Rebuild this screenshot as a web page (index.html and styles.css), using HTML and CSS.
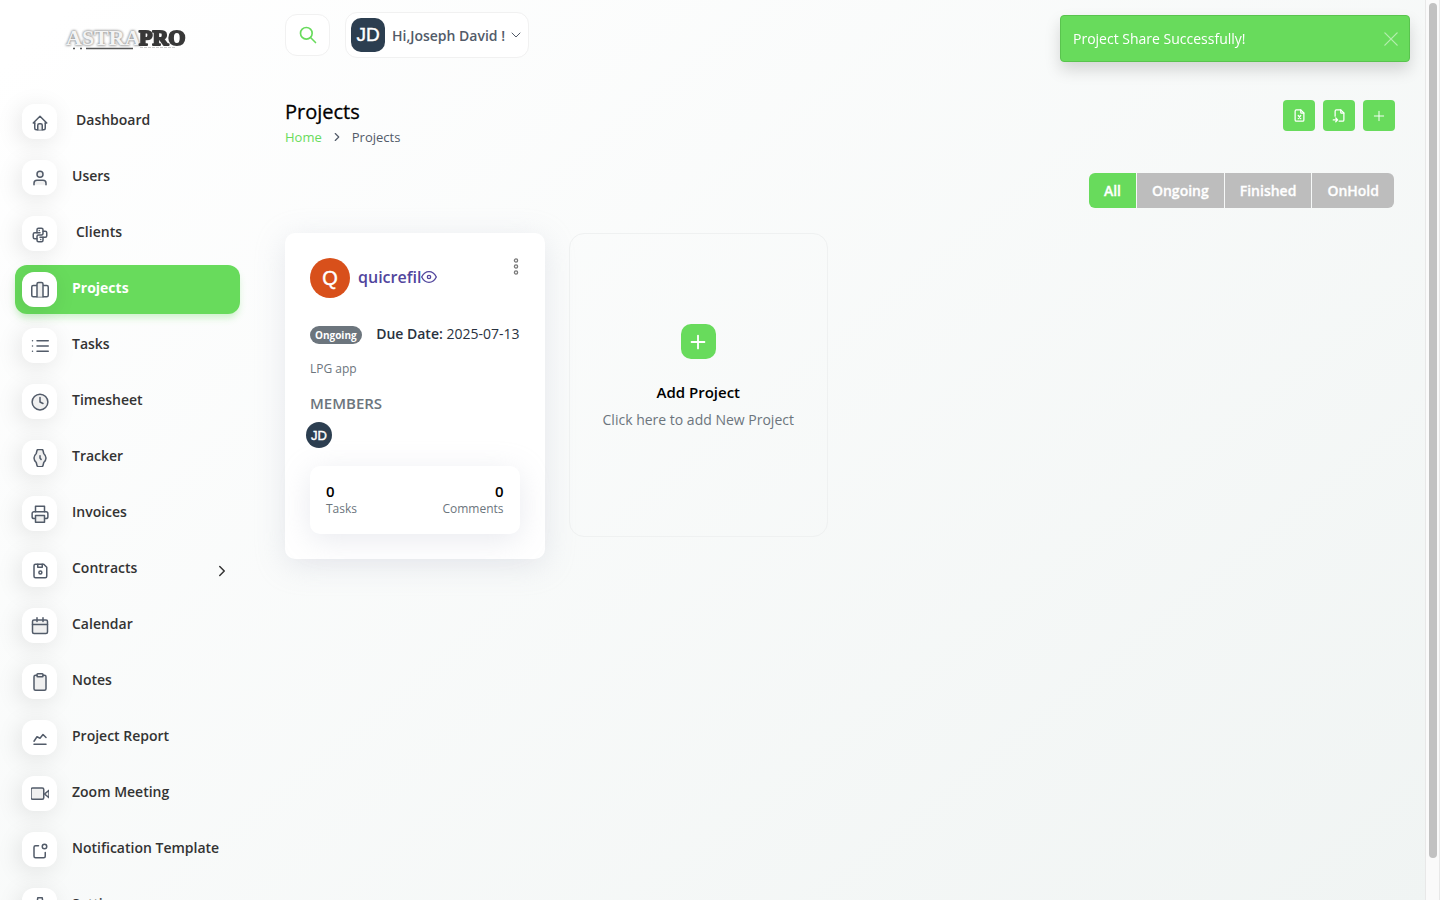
FILE: index.html
```html
<!DOCTYPE html>
<html lang="en">

<head>
    <meta charset="utf-8">
    <meta name="viewport" content="width=device-width, initial-scale=1">
    <title>Projects</title>
    <link rel="stylesheet" href="styles.css">
</head>

<body>
    <nav class="sidebar">
        <a href="#" class="logo" aria-label="AstraPro">
            <svg width="130" height="34" viewBox="0 0 130 34">
                <text x="6" y="22" class="logo-glow">ASTRA</text>
                <text x="6" y="22" class="logo-light">ASTRA</text>
                <text x="79" y="22" class="logo-dark">PRO</text>
                <path d="M13 25.500h2M20 25.500h2M26 25.500h47" stroke="#555" stroke-width="1.4" stroke-linecap="butt"/>
                <path d="M80 24.500h35" stroke="#ccc" stroke-width="1" stroke-linecap="butt" stroke-dasharray="3 1"/>
            </svg>
        </a>
        <ul class="menu">
            <li><a href="#" class="menu-link indent">
                <span class="micon"><svg class="icon low" viewBox="0 0 24 24"><path d="M5 12H3l9-9 9 9h-2"/><path d="M5 12v7a2 2 0 0 0 2 2h10a2 2 0 0 0 2-2v-7"/><path class="tint" d="M9 21v-6a2 2 0 0 1 2-2h2a2 2 0 0 1 2 2v6"/></svg></span>
                <span>Dashboard</span></a></li>
            <li><a href="#" class="menu-link">
                <span class="micon"><svg class="icon" viewBox="0 0 24 24"><path class="tint" d="M20 21v-2a4 4 0 0 0-4-4H8a4 4 0 0 0-4 4v2"/><circle class="tint" cx="12" cy="7" r="4"/></svg></span>
                <span>Users</span></a></li>
            <li><a href="#" class="menu-link indent">
                <span class="micon"><svg class="icon low" viewBox="0 0 24 24"><path d="M12 9H5a2 2 0 0 0-2 2v4a2 2 0 0 0 2 2h3"/><path d="M12 15h7a2 2 0 0 0 2-2V9a2 2 0 0 0-2-2h-3"/><path d="M8 9V5a2 2 0 0 1 2-2h4a2 2 0 0 1 2 2v5a2 2 0 0 1-2 2h-4a2 2 0 0 0-2 2v5a2 2 0 0 0 2 2h4a2 2 0 0 0 2-2v-4"/><path d="M11 6v.01M13 18v.01"/></svg></span>
                <span>Clients</span></a></li>
            <li><a href="#" class="menu-link active">
                <span class="micon"><svg class="icon" viewBox="0 0 24 24"><rect x="1" y="6" width="22" height="15" rx="2"/><path class="tint" d="M16 21V4a2 2 0 0 0-2-2h-4a2 2 0 0 0-2 2v17"/></svg></span>
                <span>Projects</span></a></li>
            <li><a href="#" class="menu-link">
                <span class="micon"><svg class="icon" viewBox="0 0 24 24"><path d="M8 5h15M8 12h15M8 19h15M2 5h.01M2 12h.01M2 19h.01"/></svg></span>
                <span>Tasks</span></a></li>
            <li><a href="#" class="menu-link">
                <span class="micon"><svg class="icon" viewBox="0 0 24 24"><circle class="tint" cx="12" cy="12" r="10.500"/><path d="M12 6v6l4 2"/></svg></span>
                <span>Timesheet</span></a></li>
            <li><a href="#" class="menu-link">
                <span class="micon"><svg class="icon" viewBox="0 0 24 24"><path class="tint" d="M7 6l1-4q.400-1.500 2-1.500h4q1.600 0 2 1.500l1 4q3 3 3 6t-3 6l-1 4q-.400 1.500-2 1.500h-4q-1.600 0-2-1.500l-1-4q-3-3-3-6t3-6z"/><path d="M12 9v3l1.500 2"/></svg></span>
                <span>Tracker</span></a></li>
            <li><a href="#" class="menu-link">
                <span class="micon"><svg class="icon" viewBox="0 0 24 24"><path d="M6 9V1.500h12V9"/><path d="M6 18H4a2.500 2.500 0 0 1-2.500-2.500v-4A2.500 2.500 0 0 1 4 9h16a2.500 2.500 0 0 1 2.500 2.500v4A2.500 2.500 0 0 1 20 18h-2"/><path class="tint" d="M6 14h12v9H6z"/></svg></span>
                <span>Invoices</span></a></li>
            <li><a href="#" class="menu-link">
                <span class="micon"><svg class="icon low" viewBox="0 0 24 24"><path d="M6 3h11l4 4v12a2 2 0 0 1-2 2H6a2 2 0 0 1-2-2V5a2 2 0 0 1 2-2"/><circle cx="12.500" cy="14" r="2"/><path d="M15 3v4H9V3"/></svg></span>
                <span>Contracts</span>
                <svg class="arrow" viewBox="0 0 24 24"><path d="M9 18l6-6-6-6"/></svg></a></li>
            <li><a href="#" class="menu-link">
                <span class="micon"><svg class="icon" viewBox="0 0 24 24"><rect class="tint" x="2" y="4" width="20" height="18" rx="2"/><path d="M16 1v5M8 1v5M2 10h20"/></svg></span>
                <span>Calendar</span></a></li>
            <li><a href="#" class="menu-link">
                <span class="micon"><svg class="icon" viewBox="0 0 24 24"><path class="tint" d="M16 3h2a2 2 0 0 1 2 2v16a2 2 0 0 1-2 2H6a2 2 0 0 1-2-2V5a2 2 0 0 1 2-2h2"/><rect x="8" y="1" width="8" height="4" rx="1"/></svg></span>
                <span>Notes</span></a></li>
            <li><a href="#" class="menu-link">
                <span class="micon"><svg class="icon low" viewBox="0 0 24 24"><path d="M4 19h16M4 15l4-6 4 2 4-5 4 4"/></svg></span>
                <span>Project Report</span></a></li>
            <li><a href="#" class="menu-link">
                <span class="micon"><svg class="icon" viewBox="0 0 24 24"><rect class="tint" x="0" y="4" width="17" height="15" rx="2"/><path class="tint" d="M24 7l-6 5 6 5z"/></svg></span>
                <span>Zoom Meeting</span></a></li>
            <li><a href="#" class="menu-link">
                <span class="micon"><svg class="icon low" viewBox="0 0 24 24"><path d="M10 5H6a2 2 0 0 0-2 2v12a2 2 0 0 0 2 2h11a2 2 0 0 0 2-2v-5"/><circle cx="18" cy="6" r="3"/></svg></span>
                <span>Notification Template</span></a></li>
            <li><a href="#" class="menu-link">
                <span class="micon"><svg class="icon" viewBox="0 0 24 24"><path d="M9 1h6l.500 4 2.500 1.500 3-1 2 3.500-2.500 3 2.500 3-2 3.500-3-1-2.500 1.500-.500 4H9l-.500-4L6 17.500l-3 1L1 15l2.500-3L1 9l2-3.500 3 1L8.500 5z"/><circle cx="12" cy="12" r="3"/></svg></span>
                <span>Settings</span></a></li>
        </ul>
    </nav>

    <main class="content">
        <header class="topbar">
            <button type="button" class="search-btn" aria-label="Search">
                <svg viewBox="0 0 24 24"><circle cx="10" cy="10" r="7"/><path d="M21 21l-6-6"/></svg>
            </button>
            <button type="button" class="user-btn">
                <span class="avatar">JD</span>
                <span>Hi,Joseph David !</span>
                <svg viewBox="0 0 24 24"><path d="M4 8l8 8 8-8"/></svg>
            </button>
        </header>

        <div class="page-head">
            <div>
                <h1>Projects</h1>
                <div class="breadcrumb">
                    <a href="#">Home</a>
                    <svg viewBox="0 0 24 24"><path d="M9 18l6-6-6-6"/></svg>
                    <span>Projects</span>
                </div>
            </div>
            <div class="actions">
                <button type="button" class="action-btn" aria-label="Export">
                    <svg viewBox="0 0 24 24"><path d="M14 3v4a1 1 0 0 0 1 1h4"/><path d="M17 21H7a2 2 0 0 1-2-2V5a2 2 0 0 1 2-2h7l5 5v11a2 2 0 0 1-2 2zM10 12l4 5m0-5l-4 5"/></svg>
                </button>
                <button type="button" class="action-btn" aria-label="Import">
                    <svg viewBox="0 0 24 24"><path d="M14 3v4a1 1 0 0 0 1 1h4"/><path d="M5 13V5a2 2 0 0 1 2-2h7l5 5v11a2 2 0 0 1-2 2h-5.500M2 19h7m-3-3l3 3-3 3"/></svg>
                </button>
                <button type="button" class="action-btn plus" aria-label="Create">
                    <svg viewBox="0 0 24 24"><path d="M12 4v16M4 12h16"/></svg>
                </button>
            </div>
        </div>

        <div class="filters">
            <button type="button" class="selected">All</button>
            <button type="button">Ongoing</button>
            <button type="button">Finished</button>
            <button type="button">OnHold</button>
        </div>

        <div class="cards">
            <article class="card">
                <div class="card-head">
                    <span class="project-img">Q</span>
                    <a href="#" class="project-name">quicrefil<svg viewBox="0 0 24 24"><path d="M1 12s4-8 11-8 11 8 11 8-4 8-11 8-11-8-11-8z"/><circle cx="12" cy="12" r="2.500"/></svg></a>
                    <button type="button" class="more" aria-label="More">
                        <svg width="8" height="18" viewBox="0 0 8 18"><circle cx="4" cy="2.500" r="1.600"/><circle cx="4" cy="8.500" r="1.600"/><circle cx="4" cy="14.500" r="1.600"/></svg>
                    </button>
                </div>
                <div class="card-status">
                    <span class="badge">Ongoing</span>
                    <span><b>Due Date:</b> 2025-07-13</span>
                </div>
                <p class="description">LPG app</p>
                <h2>MEMBERS</h2>
                <span class="member">JD</span>
                <div class="stats">
                    <div><strong>0</strong><span>Tasks</span></div>
                    <div class="right"><strong>0</strong><span>Comments</span></div>
                </div>
            </article>
            <a href="#" class="add-card">
                <span class="add-icon"><svg viewBox="0 0 24 24"><path d="M12 5v14M5 12h14"/></svg></span>
                <strong>Add Project</strong>
                <span>Click here to add New Project</span>
            </a>
        </div>
    </main>

    <div class="scroll-track"><div class="scroll-thumb"></div></div>

    <div class="toast" role="alert">
        <span>Project Share Successfully!</span>
        <button type="button" aria-label="Close"><svg viewBox="0 0 16 16"><path d="M1 1l14 14M15 1L1 15"/></svg></button>
    </div>
</body>

</html>
```

FILE: styles.css
```css
* {
    box-sizing: border-box;
}

body {
    display: flex;
    height: 100vh;
    margin: 0;
    overflow: hidden;
    font-family: "Open Sans", sans-serif;
    font-size: 14px;
    color: #293240;
    background: linear-gradient(141deg, rgba(240, 244, 243, 0) 3%, #f0f4f3 100%), #fff;
}

a {
    color: inherit;
    text-decoration: none;
}

button {
    padding: 0;
    border: none;
    font: inherit;
    cursor: pointer;
}

svg {
    flex: none;
    fill: none;
    stroke: currentColor;
    stroke-width: 2;
    stroke-linecap: round;
    stroke-linejoin: round;
}

/* sidebar */
.sidebar {
    flex: none;
    width: 255px;
    padding: 0 15px;
    overflow: hidden;
}

.logo {
    display: block;
    height: 97px;
    padding: 23px 0 0 45px;
}

.logo text {
    font: bold 22px "Liberation Serif", serif;
}

.logo-glow {
    fill: #888;
    stroke: #888;
    stroke-width: 1;
    filter: blur(1px);
}

.logo-light {
    fill: #f4f4f4;
    stroke: none;
}

.logo-dark {
    fill: #383838;
    stroke: #383838;
    stroke-width: 2;
    filter: blur(0.4px);
}

.menu {
    margin: 0;
    padding: 0;
    list-style: none;
}

.menu-link {
    display: flex;
    align-items: center;
    height: 49px;
    margin-bottom: 7px;
    padding: 0 9px 0 7px;
    border-radius: 12px;
    line-height: 20px;
    font-weight: 600;
    color: #333;
}

.menu-link > span:nth-child(2) {
    margin-bottom: 3px;
}

.micon {
    display: flex;
    align-items: center;
    justify-content: center;
    width: 35px;
    height: 35px;
    margin-right: 15px;
    border-radius: 12px;
    background: #fff;
    color: #525b69;
    box-shadow: -3px 4px 23px rgba(0, 0, 0, 0.1);
}

.indent .micon {
    margin-right: 19px;
}

.icon {
    width: 18px;
    height: 18px;
}

.low {
    margin-top: 2px;
}

.tint {
    fill: #f0f0f0;
}

.active {
    background: #68db5c;
    color: #fff;
    font-weight: 700;
    box-shadow: 0 5px 7px -1px rgba(104, 219, 92, 0.3);
}

.arrow {
    width: 18px;
    height: 18px;
    margin-left: auto;
    margin-top: 3px;
}

/* content */
.content {
    flex: 1;
    min-width: 0;
    padding: 12px 30px;
}

.topbar {
    display: flex;
    align-items: center;
    gap: 15px;
}

.search-btn,
.user-btn {
    display: flex;
    align-items: center;
    border: 1px solid #f1f1f1;
    border-radius: 12px;
    background: #fff;
}

.search-btn {
    justify-content: center;
    width: 45px;
    height: 42px;
    color: #68db5c;
}

.search-btn svg {
    width: 20px;
    height: 20px;
}

.user-btn {
    height: 46px;
    padding: 0 6px 0 5px;
    font-weight: 600;
    color: #525b69;
}

.user-btn svg {
    width: 12px;
    height: 12px;
    margin-left: 5px;
}

.avatar,
.member,
.project-img {
    display: flex;
    align-items: center;
    justify-content: center;
    background: #2c3e50;
    color: #fff;
    font-family: "Liberation Sans", sans-serif;
    -webkit-text-stroke: 0.4px #fff;
}

.avatar {
    width: 34px;
    height: 34px;
    margin-right: 7px;
    border-radius: 10px;
    font-size: 19px;
    font-weight: 400;
}

.page-head {
    display: flex;
    justify-content: space-between;
    margin-top: 40px;
}

h1 {
    margin: 0;
    font-size: 20px;
    font-weight: 500;
    line-height: 28px;
    color: #000;
    -webkit-text-stroke: 0.3px #000;
}

.breadcrumb {
    display: flex;
    align-items: center;
    gap: 8px;
    font-size: 13px;
    line-height: 22px;
    color: #525b69;
}

.breadcrumb a {
    color: #68db5c;
}

.breadcrumb svg {
    width: 14px;
    height: 14px;
}

.actions {
    display: flex;
    gap: 8px;
    padding-top: 2px;
}

.action-btn {
    display: flex;
    align-items: center;
    justify-content: center;
    width: 32px;
    height: 31px;
    border-radius: 4px;
    background: #68db5c;
    color: #fff;
}

.action-btn svg {
    width: 15px;
    height: 15px;
}

.action-btn.plus svg {
    width: 14px;
    height: 14px;
    stroke-width: 1.6;
}

.filters {
    display: flex;
    justify-content: flex-end;
    gap: 1px;
    margin: 25px 1px 25px 0;
}

.filters button {
    height: 35px;
    padding: 0 15px;
    background: #bdbdbd;
    color: #fff;
    font-weight: 600;
    -webkit-text-stroke: 0.3px #fff;
}

.filters button:first-child {
    border-radius: 6px 0 0 6px;
}

.filters button:last-child {
    border-radius: 0 6px 6px 0;
}

.filters .selected {
    background: #68db5c;
}

.cards {
    display: grid;
    grid-template-columns: repeat(4, 1fr);
    align-items: start;
    gap: 24px;
}

.card {
    padding: 25px;
    border-radius: 10px;
    background: #fff;
    box-shadow: 0 6px 30px rgba(182, 186, 203, 0.3);
}

.card-head {
    display: flex;
    align-items: center;
}

.project-img {
    width: 40px;
    height: 40px;
    margin-right: 8px;
    border-radius: 50%;
    background: #d8501b;
    font-size: 20px;
}

.project-name {
    display: flex;
    align-items: center;
    margin-bottom: 2px;
    font-size: 16px;
    font-weight: 600;
    color: #51459d;
}

.project-name svg {
    width: 16px;
    height: 16px;
}

.more {
    align-self: flex-start;
    height: 18px;
    margin-left: auto;
    background: none;
    color: #777;
}

.more svg {
    display: block;
    stroke-width: 1.3;
}

.card-status {
    display: flex;
    align-items: center;
    justify-content: space-between;
    margin-top: 26px;
    line-height: 20px;
}

.card-status b {
    font-weight: 600;
}

.badge {
    height: 18px;
    margin-top: 2px;
    padding: 0 5px;
    border-radius: 9px;
    background: #6c757d;
    color: #fff;
    font-size: 10px;
    font-weight: 700;
    line-height: 18px;
}

.description {
    margin: 16px 0 15px;
    font-size: 12px;
    line-height: 18px;
    color: #6c757d;
}

h2 {
    margin: 0;
    font-size: 15px;
    font-weight: 600;
    line-height: 20px;
    color: #6c757d;
}

.member {
    width: 26px;
    height: 26px;
    margin: 9px 0 18px -4px;
    border-radius: 50%;
    font-size: 13px;
}

.stats {
    display: flex;
    justify-content: space-between;
    padding: 16px;
    border-radius: 10px;
    background: #fff;
    box-shadow: 0 6px 30px rgba(182, 186, 203, 0.3);
}

.stats strong,
.stats span {
    display: block;
    line-height: 18px;
}

.stats strong {
    font-size: 15px;
    font-weight: 600;
    color: #000;
}

.stats span {
    font-size: 12px;
    color: #6c757d;
}

.right {
    text-align: right;
}

.add-card {
    display: flex;
    flex-direction: column;
    align-items: center;
    min-height: 304px;
    padding-top: 90px;
    border: 1px solid #eff1f1;
    border-radius: 15px;
    color: #6c757d;
}

.add-icon {
    display: flex;
    align-items: center;
    justify-content: center;
    width: 35px;
    height: 35px;
    margin-bottom: 22px;
    border-radius: 10px;
    background: #68db5c;
    color: #fff;
}

.add-icon svg {
    width: 22px;
    height: 22px;
}

.add-card strong {
    margin-bottom: 7px;
    font-size: 15px;
    font-weight: 600;
    line-height: 22px;
    color: #000;
}

/* page scrollbar */
.scroll-track {
    flex: none;
    width: 15px;
    padding: 3px;
    border: 1px solid #e8e8e8;
    border-width: 0 1px;
    background: #fafafa;
}

.scroll-thumb {
    width: 8px;
    height: 95.6%;
    border-radius: 4px;
    background: #c1c1c1;
}

.toast {
    position: fixed;
    top: 15px;
    right: 30px;
    display: flex;
    align-items: center;
    justify-content: space-between;
    width: 350px;
    height: 47px;
    padding: 0 12px;
    border: 1px solid #59c44e;
    border-radius: 4px;
    background: #68db5c;
    color: #fff;
    box-shadow: 0 8px 16px rgba(0, 0, 0, 0.15);
}

.toast button {
    height: 14px;
    margin-right: -1px;
    background: none;
    color: #fff;
    opacity: 0.5;
}

.toast svg {
    display: block;
    width: 14px;
    height: 14px;
    stroke-width: 1.5;
}
```
